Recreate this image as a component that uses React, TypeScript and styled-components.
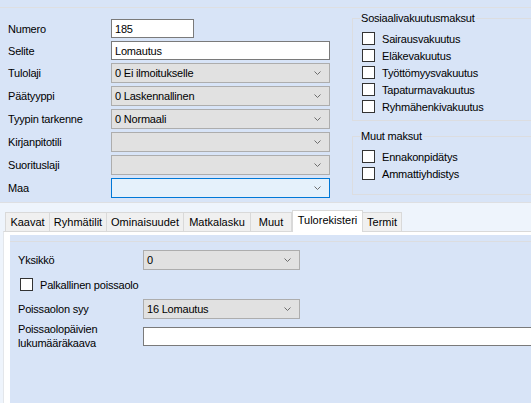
import React from "react";
import styled, { createGlobalStyle, css } from "styled-components";

const Global = createGlobalStyle`
  html, body { margin: 0; padding: 0; }
  body {
    background: #d8e4f7;
    font-family: "Liberation Sans", Arial, sans-serif;
    font-size: 11px;
    letter-spacing: -0.2px;
    color: #000;
  }
`;

const Window = styled.div`
  width: 531px;
  height: 403px;
  overflow: hidden;
  display: flex;
  flex-direction: column;
  background: #d8e4f7;
`;

const TopBand = styled.div`
  height: 7px;
  border-bottom: 1px solid #dedfe2;
  flex: none;
`;

const Header = styled.div`
  height: 195px;
  flex: none;
  display: flex;
  border-bottom: 1px solid #dedfe2;
  box-sizing: border-box;
`;

const FieldGrid = styled.div`
  flex: 0 0 352px;
  box-sizing: border-box;
  padding: 11px 0 0 8px;
  display: grid;
  grid-template-columns: 103px 219px;
  grid-auto-rows: min-content;
  row-gap: 3px;
  align-items: center;
`;

const Label = styled.div`
  line-height: 14px;
  white-space: nowrap;
`;

const TextInput = styled.div<{ $width?: number }>`
  box-sizing: border-box;
  height: 19px;
  width: ${(p) => (p.$width ? `${p.$width}px` : "100%")};
  background: #fff;
  border: 1px solid #7a7a7a;
  padding: 0 3px;
  display: flex;
  align-items: center;
  line-height: 14px;
`;

const ComboBox = styled.div<{ $focused?: boolean; $width?: number }>`
  box-sizing: border-box;
  height: 20px;
  width: ${(p) => (p.$width ? `${p.$width}px` : "100%")};
  background: #e1e1e1;
  border: 1px solid #adadad;
  padding: 0 3px;
  display: flex;
  align-items: center;
  justify-content: space-between;
  line-height: 14px;
  ${(p) =>
    p.$focused &&
    css`
      background: #e5f1fb;
      border-color: #0078d7;
    `}
`;

const Chevron = () => (
  <svg width="7" height="4" viewBox="0 0 7 4" style={{ marginRight: 5 }}>
    <polyline points="0.5,0.5 3.5,3.5 6.5,0.5" fill="none" stroke="#6d6d6d" strokeWidth="1" />
  </svg>
);

const SideColumn = styled.div`
  flex: 0 0 200px;
  padding-top: 3px;
  display: flex;
  flex-direction: column;
  gap: 8px;
`;

const GroupBox = styled.fieldset<{ $padBottom: number }>`
  margin: 0;
  border: 1px solid #dcdde0;
  padding: 5px 0 ${(p) => p.$padBottom}px 9px;
  min-width: 0;
`;

const Legend = styled.legend`
  padding: 0 1px;
  margin-left: -2px;
  line-height: 14px;
`;

const CheckRow = styled.label`
  display: flex;
  align-items: center;
  height: 17px;
  white-space: nowrap;
`;

const Box = styled.span`
  box-sizing: border-box;
  width: 13px;
  height: 13px;
  background: #fff;
  border: 1px solid #333;
  flex: none;
  margin-right: 7px;
`;

const TabArea = styled.div`
  flex: 1;
  background: #eef4fc;
  padding-top: 7px;
  display: flex;
  flex-direction: column;
`;

const TabStrip = styled.div`
  display: flex;
  align-items: flex-end;
  height: 21px;
  padding-left: 5px;
  position: relative;
  z-index: 1;
`;

const Tab = styled.div<{ $active?: boolean; $width: number }>`
  box-sizing: border-box;
  width: ${(p) => p.$width}px;
  height: 19px;
  display: flex;
  align-items: center;
  justify-content: center;
  background: #f0f0f0;
  border: 1px solid #d9d9d9;
  border-left-width: 0;
  border-bottom: none;
  white-space: nowrap;
  letter-spacing: 0;
  &:first-child {
    border-left-width: 1px;
  }
  ${(p) =>
    p.$active &&
    css`
      height: 22px;
      margin-bottom: -1px;
      background: #fff;
      border-left-width: 1px;
      padding-bottom: 3px;
    `}
`;

const TabPage = styled.div`
  flex: 1;
  margin-left: 3px;
  background: #fff;
  border-top: 1px solid #d9d9d9;
  border-left: 1px solid #e3e6ea;
  padding: 3px 0 0 6px;
  display: flex;
`;

const PagePanel = styled.div`
  flex: 1;
  background: #d8e4f7;
  padding-top: 6px;
  display: flex;
`;

const PageGrid = styled.div`
  flex: 1;
  border-top: 1px solid #dcdde0;
  padding: 8px 0 0 8px;
  display: grid;
  grid-template-columns: 125px 1fr;
  grid-auto-rows: min-content;
  row-gap: 4px;
  align-items: center;
  align-content: start;
`;

const WideCheck = styled(CheckRow)`
  grid-column: 1 / span 2;
  padding-left: 2px;
  height: 21px;
`;

const TwoLineLabel = styled(Label)`
  align-self: start;
  margin-top: -1px;
`;

const WideInput = styled(TextInput)`
  width: 420px;
`;

const fields: { label: string; kind: "text" | "combo"; value: string; width?: number; focused?: boolean }[] = [
  { label: "Numero", kind: "text", value: "185", width: 83 },
  { label: "Selite", kind: "text", value: "Lomautus" },
  { label: "Tulolaji", kind: "combo", value: "0 Ei ilmoitukselle" },
  { label: "Päätyyppi", kind: "combo", value: "0 Laskennallinen" },
  { label: "Tyypin tarkenne", kind: "combo", value: "0 Normaali" },
  { label: "Kirjanpitotili", kind: "combo", value: "" },
  { label: "Suorituslaji", kind: "combo", value: "" },
  { label: "Maa", kind: "combo", value: "", focused: true },
];

const social = ["Sairausvakuutus", "Eläkevakuutus", "Työttömyysvakuutus", "Tapaturmavakuutus", "Ryhmähenkivakuutus"];
const other = ["Ennakonpidätys", "Ammattiyhdistys"];
const tabs: { name: string; width: number }[] = [
  { name: "Kaavat", width: 45 },
  { name: "Ryhmätilit", width: 57 },
  { name: "Ominaisuudet", width: 77 },
  { name: "Matkalasku", width: 67 },
  { name: "Muut", width: 41 },
  { name: "Tulorekisteri", width: 71 },
  { name: "Termit", width: 39 },
];

export default function App() {
  return (
    <>
      <Global />
      <Window>
        <TopBand />
        <Header>
          <FieldGrid>
            {fields.map((f) => (
              <React.Fragment key={f.label}>
                <Label>{f.label}</Label>
                {f.kind === "text" ? (
                  <TextInput $width={f.width}>{f.value}</TextInput>
                ) : (
                  <ComboBox $focused={f.focused}>
                    <span>{f.value}</span>
                    <Chevron />
                  </ComboBox>
                )}
              </React.Fragment>
            ))}
          </FieldGrid>
          <SideColumn>
            <GroupBox $padBottom={5}>
              <Legend>Sosiaalivakuutusmaksut</Legend>
              {social.map((s) => (
                <CheckRow key={s}>
                  <Box />
                  {s}
                </CheckRow>
              ))}
            </GroupBox>
            <GroupBox $padBottom={12}>
              <Legend>Muut maksut</Legend>
              {other.map((s) => (
                <CheckRow key={s}>
                  <Box />
                  {s}
                </CheckRow>
              ))}
            </GroupBox>
          </SideColumn>
        </Header>
        <TabArea>
          <TabStrip>
            {tabs.map((t) => (
              <Tab key={t.name} $width={t.width} $active={t.name === "Tulorekisteri"}>
                {t.name}
              </Tab>
            ))}
          </TabStrip>
          <TabPage>
            <PagePanel>
              <PageGrid>
                <Label>Yksikkö</Label>
                <ComboBox $width={157}>
                  <span>0</span>
                  <Chevron />
                </ComboBox>
                <WideCheck>
                  <Box />
                  Palkallinen poissaolo
                </WideCheck>
                <Label>Poissaolon syy</Label>
                <ComboBox $width={157}>
                  <span>16 Lomautus</span>
                  <Chevron />
                </ComboBox>
                <TwoLineLabel>
                  Poissaolopäivien
                  <br />
                  lukumääräkaava
                </TwoLineLabel>
                <WideInput />
              </PageGrid>
            </PagePanel>
          </TabPage>
        </TabArea>
      </Window>
    </>
  );
}
